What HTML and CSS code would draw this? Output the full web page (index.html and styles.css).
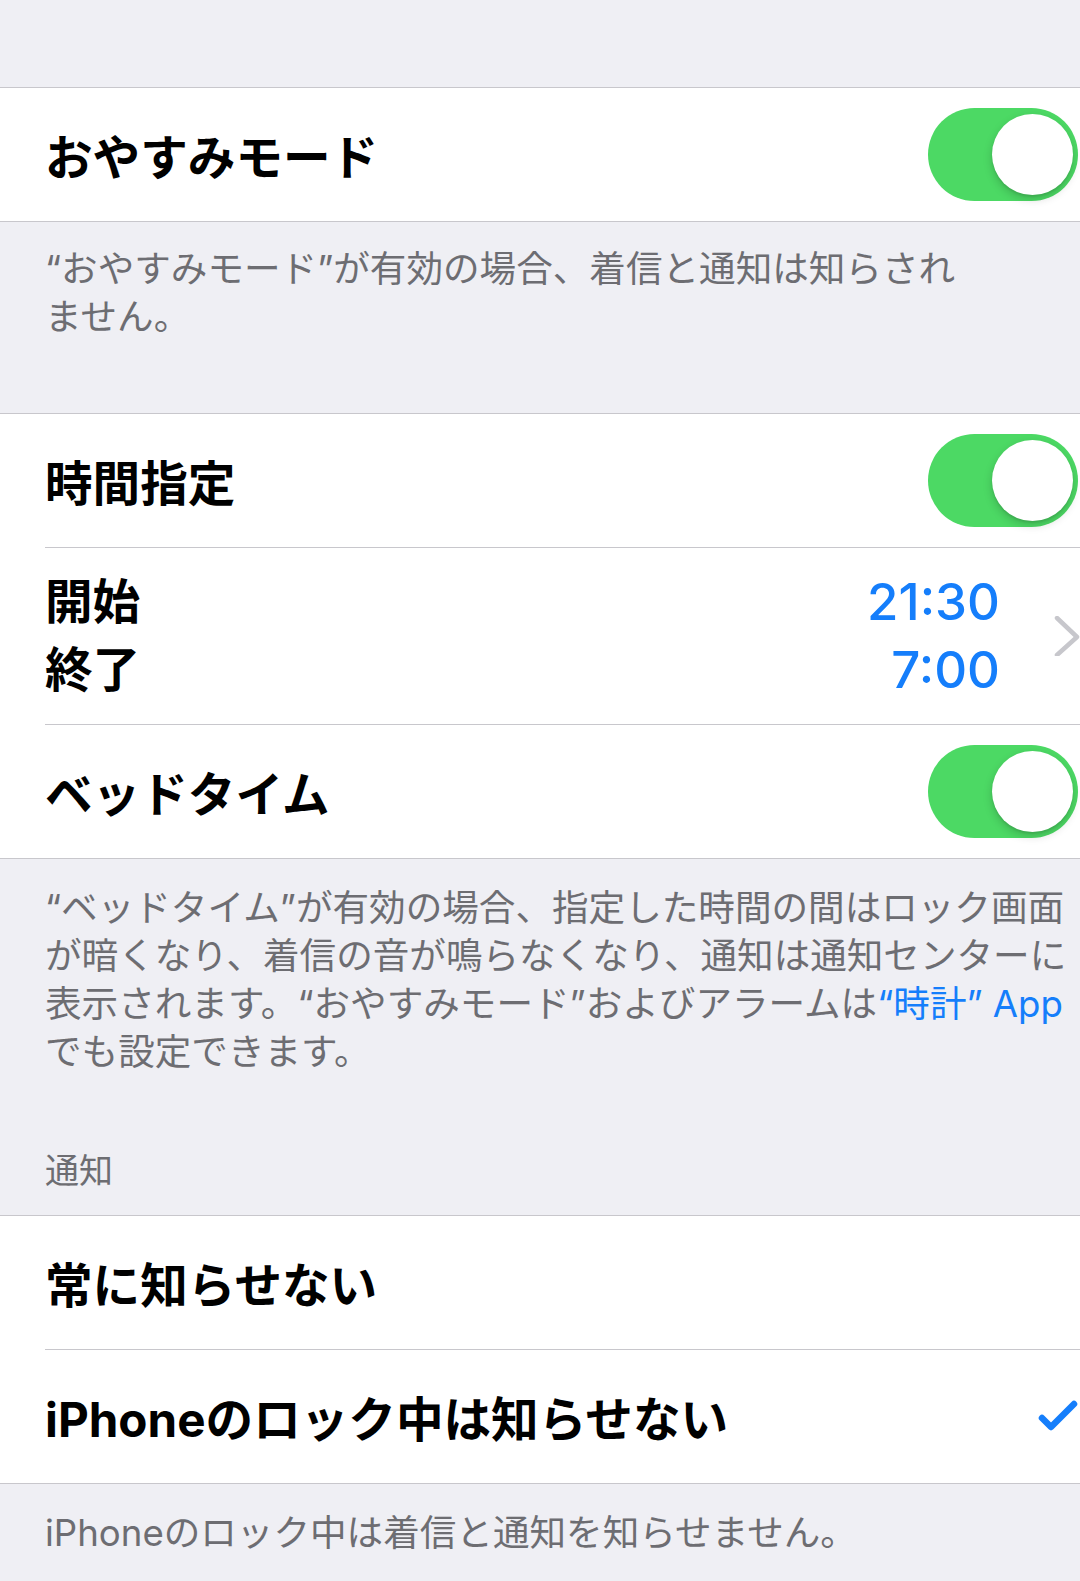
FILE: index.html
```html
<!DOCTYPE html>
<html lang="ja">
    <head>
        <meta charset="utf-8">
        <title>おやすみモード</title>
        <link rel="stylesheet" href="styles.css">
    </head>
    <body>
        <div class="banda"></div>

        <section class="grupo">
            <div class="fila">
                <span class="titulo">おやすみモード</span>
                <div class="interruptor"><div class="perilla"></div></div>
            </div>
        </section>
        <p class="nota nota_uno">“おやすみモード”が有効の場合、着信と通知は知らされ<br>ません。</p>

        <section class="grupo">
            <div class="fila">
                <span class="titulo">時間指定</span>
                <div class="interruptor"><div class="perilla"></div></div>
            </div>
            <div class="fila fila_alta">
                <div class="etiquetas">
                    <div>開始</div>
                    <div>終了</div>
                </div>
                <div class="horas">
                    <div>21:30</div>
                    <div>7:00</div>
                </div>
                <svg class="flecha" width="30" height="40" viewBox="0 0 30 40">
                    <path d="M7 2 L27 21 L7 39" fill="none" stroke="#c7c7cc" stroke-width="4.5" stroke-linecap="round" stroke-linejoin="round"/>
                </svg>
            </div>
            <div class="fila">
                <span class="titulo">ベッドタイム</span>
                <div class="interruptor"><div class="perilla"></div></div>
            </div>
        </section>
        <p class="nota nota_dos">“ベッドタイム”が有効の場合、指定した時間の間はロック画面<br>が暗くなり、着信の音が鳴らなくなり、通知は通知センターに<br>表示されます。“おやすみモード”およびアラームは<span class="enlace">“時計” App</span><br>でも設定できます。</p>
        <p class="cabecera">通知</p>

        <section class="grupo">
            <div class="fila">
                <span class="titulo">常に知らせない</span>
            </div>
            <div class="fila">
                <span class="titulo">iPhoneのロック中は知らせない</span>
                <svg class="marca" width="44" height="36" viewBox="0 0 44 36">
                    <path d="M6 19 L15 28 L38 5" fill="none" stroke="#157efb" stroke-width="6.5" stroke-linecap="round" stroke-linejoin="round"/>
                </svg>
            </div>
        </section>
        <p class="nota nota_tres">iPhoneのロック中は着信と通知を知らせません。</p>
    </body>
</html>
```

FILE: styles.css
```css
body{
    margin: 0;
    background: #efeff4;
    font-family: Inter, "Noto Sans CJK JP", sans-serif;
    color: #000;
}
.banda{
    height: 87px;
}
.grupo{
    background: #fff;
    border-top: 1px solid #c8c7cc;
    border-bottom: 1px solid #c8c7cc;
}
.fila{
    display: flex;
    align-items: center;
    height: 133px;
    margin-left: 45px;
    border-bottom: 1px solid #c8c7cc;
}
.fila:last-child{
    border-bottom: none;
}
.fila_alta{
    height: 176px;
}
.titulo{
    flex: 1;
    font-size: 47.6px;
    font-weight: 700;
    white-space: nowrap;
}
.interruptor{
    display: flex;
    justify-content: flex-end;
    align-items: center;
    width: 150px;
    height: 93px;
    box-sizing: border-box;
    padding-right: 5px;
    margin-right: 2px;
    border-radius: 47px;
    background: #4cd964;
}
.perilla{
    width: 81px;
    height: 81px;
    border-radius: 50%;
    background: #fff;
    box-shadow: 0 4px 10px rgba(0, 0, 0, 0.18), 0 2px 2px rgba(0, 0, 0, 0.08);
}
.etiquetas{
    flex: 1;
    font-size: 47.6px;
    font-weight: 700;
    line-height: 68px;
}
.horas{
    text-align: right;
    font-size: 51px;
    font-weight: 500;
    line-height: 68px;
    color: #157efb;
}
.flecha{
    display: block;
    margin-left: 50px;
}
.marca{
    display: block;
    margin-right: 0;
}
.nota{
    margin: 0;
    padding: 23px 0 0 45px;
    font-size: 36.6px;
    line-height: 48px;
    color: #6d6d72;
    white-space: nowrap;
}
.nota_uno{
    height: 168px;
}
.nota_dos{
    padding-top: 25px;
}
.nota_tres{
    padding-top: 25px;
    height: 72px;
}
.enlace{
    color: #157efb;
}
.cabecera{
    margin: 73px 0 0;
    padding: 0 0 22px 45px;
    font-size: 34px;
    line-height: 44px;
    color: #6d6d72;
}
```
